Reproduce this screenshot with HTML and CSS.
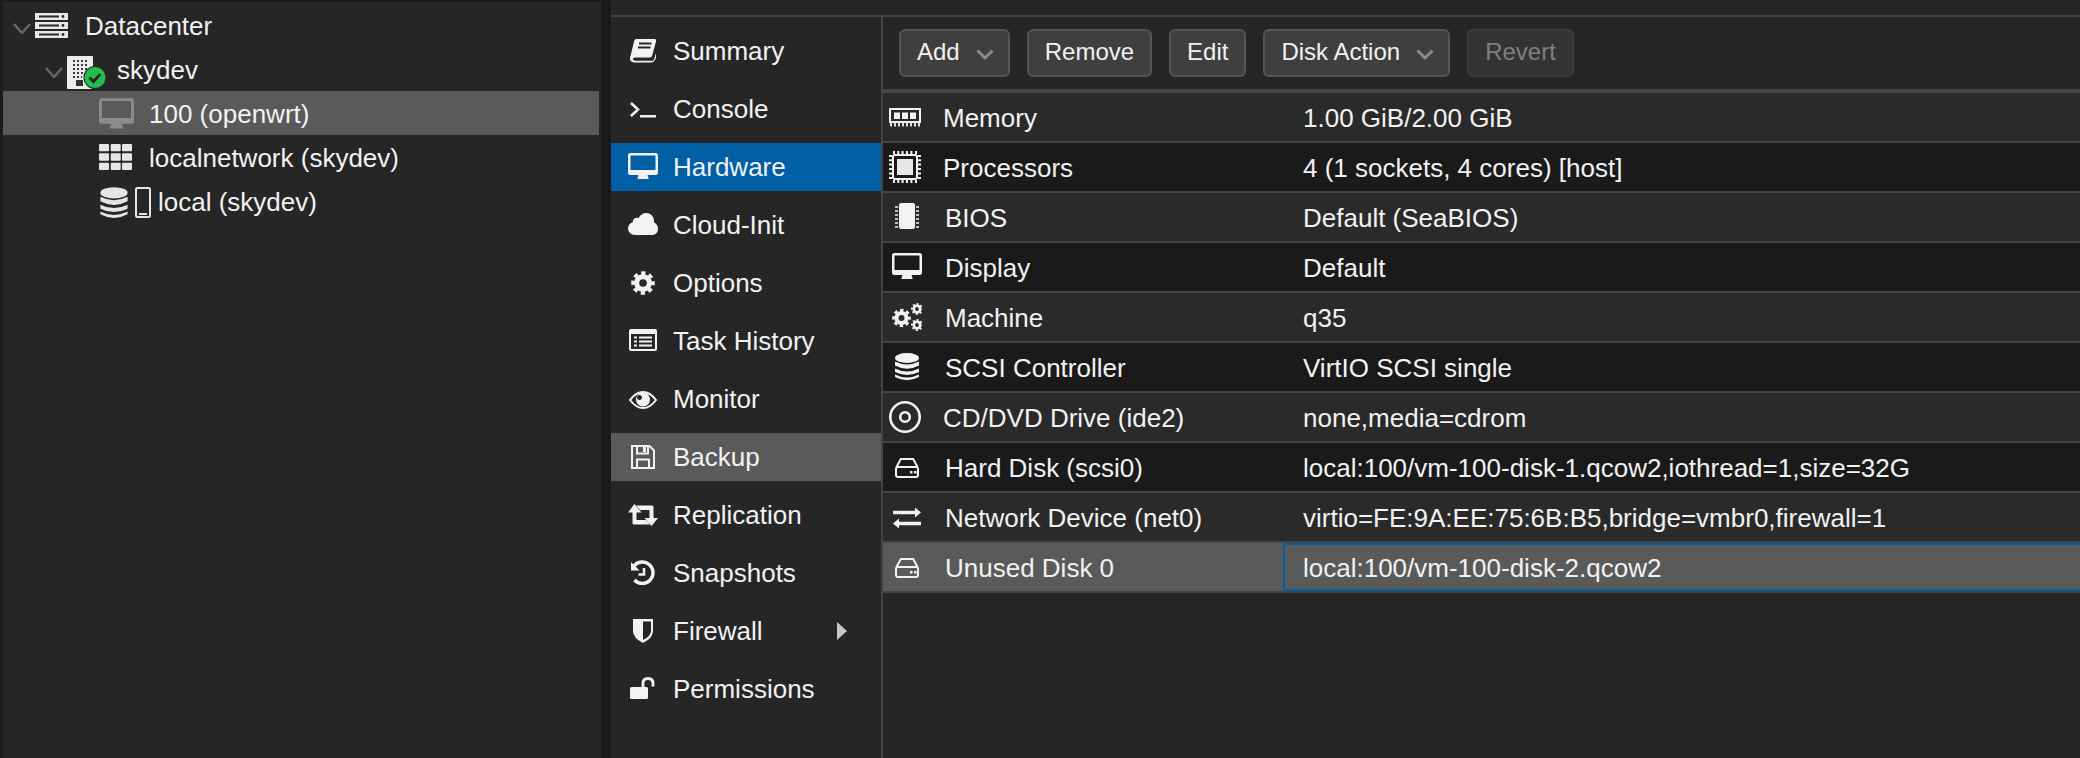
FILE: index.html
```html
<!DOCTYPE html>
<html>
<head>
<meta charset="utf-8">
<title>skydev - 100 (openwrt) - Hardware</title>
<link rel="stylesheet" href="styles.css">
</head>
<body>
<svg class="sprites" width="0" height="0">
  <symbol id="i-monitor" viewBox="0 0 30 30">
    <path fill-rule="evenodd" d="M2.5 1H27.5Q30 1 30 3.5V20.5Q30 23 27.5 23H19.5L20.5 26Q21 27 19.5 27H10.5Q9 27 9.5 26L10.5 23H2.5Q0 23 0 20.5V3.5Q0 1 2.5 1ZM3 3.5Q2.5 3.5 2.5 4V17.5Q2.5 18 3 18H27Q27.5 18 27.5 17.5V4Q27.5 3.5 27 3.5Z"/>
  </symbol>
  <symbol id="i-gear" viewBox="0 0 30 30">
    <circle cx="15" cy="15" r="8" fill="none" stroke="currentColor" stroke-width="6.5"/>
    <circle cx="15" cy="15" r="12.5" fill="none" stroke="currentColor" stroke-width="4.5" stroke-dasharray="5.3 4.52" stroke-dashoffset="2.65"/>
  </symbol>
  <symbol id="i-db" viewBox="0 0 30 30">
    <ellipse cx="15" cy="6" rx="12" ry="5"/>
    <path d="M3 9.5Q15 15.5 27 9.5V13.5Q15 20 3 13.5Z"/>
    <path d="M3 16.5Q15 22.5 27 16.5V20Q15 26 3 20Z"/>
    <path d="M3 22.5Q15 28.5 27 22.5V25Q15 31.5 3 25Z"/>
  </symbol>
  <symbol id="i-hdd" viewBox="0 0 30 30">
    <path d="M4.5 15L8.8 7H21.2L25.5 15" fill="none" stroke="currentColor" stroke-width="2"/>
    <rect x="4" y="15" width="22" height="10" rx="2" fill="none" stroke="currentColor" stroke-width="2"/>
    <rect x="18" y="19" width="2.5" height="2.5"/>
    <rect x="22" y="19" width="2.5" height="2.5"/>
  </symbol>
</svg>

<div class="page">
  <div class="tree">
    <div class="node">
      <svg class="chev" viewBox="0 0 18 11"><path d="M1 1L9 10L17 1"/></svg>
      <svg class="ico-dc" viewBox="0 0 33 26">
        <path fill="#e8e8e8" d="M0 1H33V8H0ZM0 10H33V17H0ZM0 19H33V26H0Z"/>
        <path fill="#262626" d="M4 3.5H24V5.5H4ZM4 12.5H24V14.5H4ZM4 21.5H24V23.5H4Z"/>
        <circle fill="#262626" cx="28" cy="4.5" r="1.4"/><circle fill="#262626" cx="28" cy="13.5" r="1.4"/><circle fill="#262626" cx="28" cy="22.5" r="1.4"/>
      </svg>
      <span>Datacenter</span>
    </div>
    <div class="node lvl1">
      <svg class="chev" viewBox="0 0 18 11"><path d="M1 1L9 10L17 1"/></svg>
      <svg class="ico-host" viewBox="0 0 40 36">
        <rect y="3" width="26" height="33" rx="1" fill="#ececec"/>
        <path stroke="#3a3a3a" stroke-width="2.2" stroke-dasharray="2 2" d="M6 8H22M6 12H22M6 16H22M6 20H18M6 24H15"/>
        <rect x="9" y="27" width="7" height="6" fill="#333"/>
        <circle cx="28" cy="24.5" r="11.5" fill="#262626"/>
        <circle cx="28" cy="24.5" r="10.5" fill="#21bf4b"/>
        <path d="M22.5 24.5L26.5 28.5L33.5 21" fill="none" stroke="#262626" stroke-width="3"/>
      </svg>
      <span>skydev</span>
    </div>
    <div class="node lvl2 sel">
      <svg class="ico-vm"><use href="#i-monitor"/></svg>
      <span>100 (openwrt)</span>
    </div>
    <div class="node lvl2">
      <svg class="ico-net" viewBox="0 0 33 26">
        <path fill="#e6e6e6" d="M1 0H9Q10 0 10 1V6.3Q10 7.3 9 7.3H1Q0 7.3 0 6.3V1Q0 0 1 0ZM12.7 0H20.7Q21.7 0 21.7 1V6.3Q21.7 7.3 20.7 7.3H12.7Q11.7 7.3 11.7 6.3V1Q11.7 0 12.7 0ZM24 0H32Q33 0 33 1V6.3Q33 7.3 32 7.3H24Q23 7.3 23 6.3V1Q23 0 24 0ZM1 9.3H9Q10 9.3 10 10.3V15.7Q10 16.7 9 16.7H1Q0 16.7 0 15.7V10.3Q0 9.3 1 9.3ZM12.7 9.3H20.7Q21.7 9.3 21.7 10.3V15.7Q21.7 16.7 20.7 16.7H12.7Q11.7 16.7 11.7 15.7V10.3Q11.7 9.3 12.7 9.3ZM24 9.3H32Q33 9.3 33 10.3V15.7Q33 16.7 32 16.7H24Q23 16.7 23 15.7V10.3Q23 9.3 24 9.3ZM1 18.7H9Q10 18.7 10 19.7V25Q10 26 9 26H1Q0 26 0 25V19.7Q0 18.7 1 18.7ZM12.7 18.7H20.7Q21.7 18.7 21.7 19.7V25Q21.7 26 20.7 26H12.7Q11.7 26 11.7 25V19.7Q11.7 18.7 12.7 18.7ZM24 18.7H32Q33 18.7 33 19.7V25Q33 26 32 26H24Q23 26 23 25V19.7Q23 18.7 24 18.7Z"/>
      </svg>
      <span>localnetwork (skydev)</span>
    </div>
    <div class="node lvl2">
      <svg class="ico-local" viewBox="0 0 52 36">
        <use href="#i-db" x="-2" y="3" width="34" height="34"/>
        <rect x="37" y="5" width="14" height="29" rx="1.5" fill="none" stroke="#e6e6e6" stroke-width="2"/>
        <rect x="40" y="30" width="8" height="2" fill="#e6e6e6"/>
      </svg>
      <span>local (skydev)</span>
    </div>
  </div>

  <div class="splitter"></div>

  <div class="main">
    <div class="main-body">
      <div class="menu">
        <div class="item">
          <svg viewBox="0 0 30 30"><path d="M8 3H26.5Q28.5 3 28 5.5L24.2 19.5Q23.8 21.5 22 21.5H7.5Q5 21.5 4.8 23Q5 24.7 7 24.7H24Q25.5 24.7 26 23.5L28 17V22Q26 26.5 23 26.5H7Q2 26.5 2 22.5Q2 21 3 18L6 5.5Q6.5 3 8 3Z"/><path d="M11 7.5H23.5M10 11.5H22.5" stroke="#262626" stroke-width="2"/></svg>
          <span>Summary</span>
        </div>
        <div class="item">
          <svg viewBox="0 0 30 30"><path d="M3 9L10 15.5L3 22" fill="none" stroke="currentColor" stroke-width="2.5"/><rect x="12" y="21" width="16" height="2.5"/></svg>
          <span>Console</span>
        </div>
        <div class="item current">
          <svg><use href="#i-monitor"/></svg>
          <span>Hardware</span>
        </div>
        <div class="item">
          <svg viewBox="0 0 30 30"><path d="M7 25C3 25 0 22 0 18.5C0 15.5 2 13 4.8 12.3C4.6 9 7.5 7 10.5 8.2C12 5 15 3 18 3C22.5 3 26 6.5 26 11V12.6C28.5 13.8 30 16 30 19C30 22.5 27.5 25 24 25Z"/></svg>
          <span>Cloud-Init</span>
        </div>
        <div class="item">
          <svg viewBox="0 0 30 30"><use href="#i-gear" x="3" y="3" width="24" height="24"/></svg>
          <span>Options</span>
        </div>
        <div class="item">
          <svg viewBox="0 0 30 30"><path fill-rule="evenodd" d="M3 3H27Q29 3 29 5V23Q29 25 27 25H3Q1 25 1 23V5Q1 3 3 3ZM3 8V22.5Q3 23 3.5 23H26.5Q27 23 27 22.5V8Z"/><path d="M6 10.5H9V12.5H6ZM11 10.5H24V12.5H11ZM6 14.5H9V16.5H6ZM11 14.5H24V16.5H11ZM6 18.5H9V20.5H6ZM11 18.5H24V20.5H11Z"/></svg>
          <span>Task History</span>
        </div>
        <div class="item">
          <svg viewBox="0 0 30 30"><path d="M2 16Q8 8 15 8Q22 8 28 16Q22 24 15 24Q8 24 2 16Z" fill="none" stroke="currentColor" stroke-width="2"/><path fill-rule="evenodd" d="M15 8.5A7 7 0 1 1 14.99 8.5ZM11.5 11A2.5 2.5 0 1 0 11.51 11Z"/></svg>
          <span>Monitor</span>
        </div>
        <div class="item hover">
          <svg viewBox="0 0 30 30"><path d="M4 4H21.5L26 8.5V26H4Z" fill="none" stroke="currentColor" stroke-width="2"/><path d="M9 4V11.5H20V4M9 26V17.5H21V26" fill="none" stroke="currentColor" stroke-width="2"/><rect x="15" y="5" width="3" height="5"/></svg>
          <span>Backup</span>
        </div>
        <div class="item">
          <svg viewBox="0 0 30 30"><path d="M6.5 4L13.5 12.5H8.5V20H18L22 24.5H6Q4.5 24.5 4.5 23V12.5H0Z"/><path d="M23.5 26L16.5 18H21.5V10H12L8 5.5H24Q25.5 5.5 25.5 7V18H30Z"/></svg>
          <span>Replication</span>
        </div>
        <div class="item">
          <svg viewBox="0 0 30 30"><path d="M6 8A10.7 10.7 0 1 1 6.5 22" fill="none" stroke="currentColor" stroke-width="3.4"/><path d="M3 4V12.5H11.5Z"/><path d="M16 10V16.5H10.5" fill="none" stroke="currentColor" stroke-width="2.5"/></svg>
          <span>Snapshots</span>
        </div>
        <div class="item">
          <svg viewBox="0 0 30 30"><path fill-rule="evenodd" d="M5 3H25V15Q25 22 15 27Q5 22 5 15ZM15 5.5V24Q23 20 23 15V5.5Z"/></svg>
          <span>Firewall</span>
          <i class="expand"></i>
        </div>
        <div class="item">
          <svg viewBox="0 0 30 30"><rect x="2" y="13" width="18" height="12" rx="1.5"/><path d="M15 13V9.5Q15 4.5 20 4.5Q25 4.5 25 9.5V12.5" fill="none" stroke="currentColor" stroke-width="2.8"/></svg>
          <span>Permissions</span>
        </div>
      </div>

      <div class="panel">
        <div class="toolbar">
          <div class="btn drop">Add<svg class="arrow" viewBox="0 0 18 11"><path d="M1.5 1.5L9 9L16.5 1.5"/></svg></div>
          <div class="btn">Remove</div>
          <div class="btn">Edit</div>
          <div class="btn drop">Disk Action<svg class="arrow" viewBox="0 0 18 11"><path d="M1.5 1.5L9 9L16.5 1.5"/></svg></div>
          <div class="btn off">Revert</div>
        </div>
        <div class="grid">
          <div class="row">
            <div class="name wide">
              <svg viewBox="0 0 32 32"><path fill-rule="evenodd" d="M0 7H32V22H0ZM2 9V20H30V9Z"/><path d="M5 11.5H11V18H5ZM13 11.5H19V18H13ZM21 11.5H27V18H21Z"/><path d="M2 22V25.5M6 22V25.5M10 22V25.5M14 22V25.5M18 22V25.5M22 22V25.5M26 22V25.5M30 22V25.5" stroke="currentColor" stroke-width="1.8"/></svg>
              <span>Memory</span>
            </div>
            <div class="val">1.00 GiB/2.00 GiB</div>
          </div>
          <div class="row">
            <div class="name wide">
              <svg viewBox="0 0 32 32"><rect x="4" y="4" width="24" height="24" rx="2" fill="none" stroke="currentColor" stroke-width="2"/><rect x="8" y="8" width="16" height="16" fill="#e6e6e6"/><path d="M5 0V3M9.3 0V3M13.6 0V3M18 0V3M22.4 0V3M27 0V3M5 29V32M9.3 29V32M13.6 29V32M18 29V32M22.4 29V32M27 29V32M0 5H3M0 9.3H3M0 13.6H3M0 18H3M0 22.4H3M0 27H3M29 5H32M29 9.3H32M29 13.6H32M29 18H32M29 22.4H32M29 27H32" stroke="currentColor" stroke-width="2"/></svg>
              <span>Processors</span>
            </div>
            <div class="val">4 (1 sockets, 4 cores) [host]</div>
          </div>
          <div class="row">
            <div class="name">
              <svg viewBox="0 0 30 30"><rect x="7" y="1" width="16" height="26" rx="2"/><path d="M3 5H6M3 9H6M3 13H6M3 17H6M3 21H6M3 25H6M24 5H27M24 9H27M24 13H27M24 17H27M24 21H27M24 25H27" stroke="currentColor" stroke-width="1.5"/></svg>
              <span>BIOS</span>
            </div>
            <div class="val">Default (SeaBIOS)</div>
          </div>
          <div class="row">
            <div class="name">
              <svg><use href="#i-monitor"/></svg>
              <span>Display</span>
            </div>
            <div class="val">Default</div>
          </div>
          <div class="row">
            <div class="name">
              <svg viewBox="0 0 30 30"><use href="#i-gear" x="0" y="6.5" width="19" height="19"/><use href="#i-gear" x="19" y="1" width="12" height="12"/><use href="#i-gear" x="19" y="17" width="12" height="12"/></svg>
              <span>Machine</span>
            </div>
            <div class="val">q35</div>
          </div>
          <div class="row">
            <div class="name">
              <svg><use href="#i-db"/></svg>
              <span>SCSI Controller</span>
            </div>
            <div class="val">VirtIO SCSI single</div>
          </div>
          <div class="row">
            <div class="name wide">
              <svg viewBox="0 0 32 32"><circle cx="16" cy="16" r="14.7" fill="none" stroke="currentColor" stroke-width="2.6"/><circle cx="16" cy="16" r="4.8" fill="none" stroke="currentColor" stroke-width="2.6"/></svg>
              <span>CD/DVD Drive (ide2)</span>
            </div>
            <div class="val">none,media=cdrom</div>
          </div>
          <div class="row">
            <div class="name">
              <svg><use href="#i-hdd"/></svg>
              <span>Hard Disk (scsi0)</span>
            </div>
            <div class="val">local:100/vm-100-disk-1.qcow2,iothread=1,size=32G</div>
          </div>
          <div class="row">
            <div class="name">
              <svg viewBox="0 0 30 30"><path d="M1 8.8H23V5.5L29 10.5L23 15.5V12.2H1ZM29 19.8H7V16.5L1 21.5L7 26.5V23.2H29Z"/></svg>
              <span>Network Device (net0)</span>
            </div>
            <div class="val">virtio=FE:9A:EE:75:6B:B5,bridge=vmbr0,firewall=1</div>
          </div>
          <div class="row sel">
            <div class="name">
              <svg><use href="#i-hdd"/></svg>
              <span>Unused Disk 0</span>
            </div>
            <div class="val focus">local:100/vm-100-disk-2.qcow2</div>
          </div>
        </div>
      </div>
    </div>
  </div>
</div>
</body>
</html>
```

FILE: styles.css
```css
html, body { margin: 0; height: 100%; overflow: hidden; background: #262626; }
body { font: 26px "Liberation Sans", Arial, sans-serif; color: #f2f2f2; }
svg { fill: currentColor; flex: none; }
.sprites { position: absolute; }

.page { display: flex; height: 758px; }

/* left resource tree */
.tree { width: 598px; padding-top: 3px; border-left: 3px solid #1c1c1c; box-sizing: content-box; background: #262626; box-shadow: inset 0 2px 0 #1c1c1c; }
.node { display: flex; align-items: center; height: 44px; padding-left: 10px; }
.node span { padding-top: 2px; }
.node.lvl1 { padding-left: 42px; }
.node.lvl2 { padding-left: 96px; }
.node.sel { background: #5a5a5a; margin-right: 2px; }
.chev { width: 18px; height: 11px; margin: 7px 4px 0 0; fill: none; stroke: #666; stroke-width: 2.5; }
.ico-dc { width: 33px; height: 26px; margin-right: 17px; }
.ico-host { width: 40px; height: 36px; margin-right: 10px; margin-top: 3px; }
.ico-vm { width: 35px; height: 35px; margin-right: 15px; margin-top: 2px; color: #8c8c8c; }
.ico-net { width: 33px; height: 26px; margin-right: 17px; color: #e6e6e6; }
.ico-local { width: 52px; height: 36px; margin-right: 7px; color: #e6e6e6; }

.splitter { width: 10px; background: #1a1a1a; }

.main { flex: 1; padding-top: 15px; min-width: 0; }
.main-body { display: flex; height: 100%; border-top: 2px solid #444; }

/* tab menu */
.menu { width: 270px; padding-top: 10px; flex: none; }
.item { display: flex; align-items: center; height: 48px; margin-bottom: 10px; padding-left: 17px; position: relative; }
.item svg { width: 30px; height: 30px; margin-right: 15px; }
.item.current { background: #005fa5; }
.item.hover { background: #5a5a5a; }
.expand { margin-left: auto; margin-right: 34px; border-left: 10px solid #c8c8c8; border-top: 9.5px solid transparent; border-bottom: 9.5px solid transparent; }

/* hardware panel */
.panel { flex: 1; min-width: 0; border-left: 2px solid #444; }
.toolbar { display: flex; gap: 17px; height: 48px; padding: 12px 16px; border-bottom: 4px solid #444; }
.btn { display: flex; align-items: center; padding: 0 16px 2px; font-size: 24px; background: #3f3f3f; border: 2px solid #555; border-radius: 6px; }
.btn.drop { padding-right: 14px; }
.btn.off { background: #333; border-color: #3c3c3c; color: #808080; }
.arrow { width: 18px; height: 11px; margin-left: 16px; margin-top: 4px; fill: none; stroke: #8a8a8a; stroke-width: 3; }

.row { display: flex; height: 48px; border-bottom: 2px solid #444; background: #2a2a2a; }
.row:nth-child(even) { background: #1a1a1a; }
.row.sel { background: #5a5a5a; }
.name { display: flex; align-items: center; width: 400px; padding-left: 9px; box-sizing: border-box; flex: none; }
.name span { padding-top: 2px; }
.name svg { width: 30px; height: 30px; margin-right: 23px; }
.name.wide { padding-left: 6px; }
.name.wide svg { width: 32px; height: 32px; margin-right: 22px; }
.val { flex: 1; display: flex; align-items: center; box-sizing: border-box; padding: 2px 0 0 20px; white-space: nowrap; }
.val.focus { padding-left: 18px; border: 2px solid #005fa5; border-right-width: 0; }
```
